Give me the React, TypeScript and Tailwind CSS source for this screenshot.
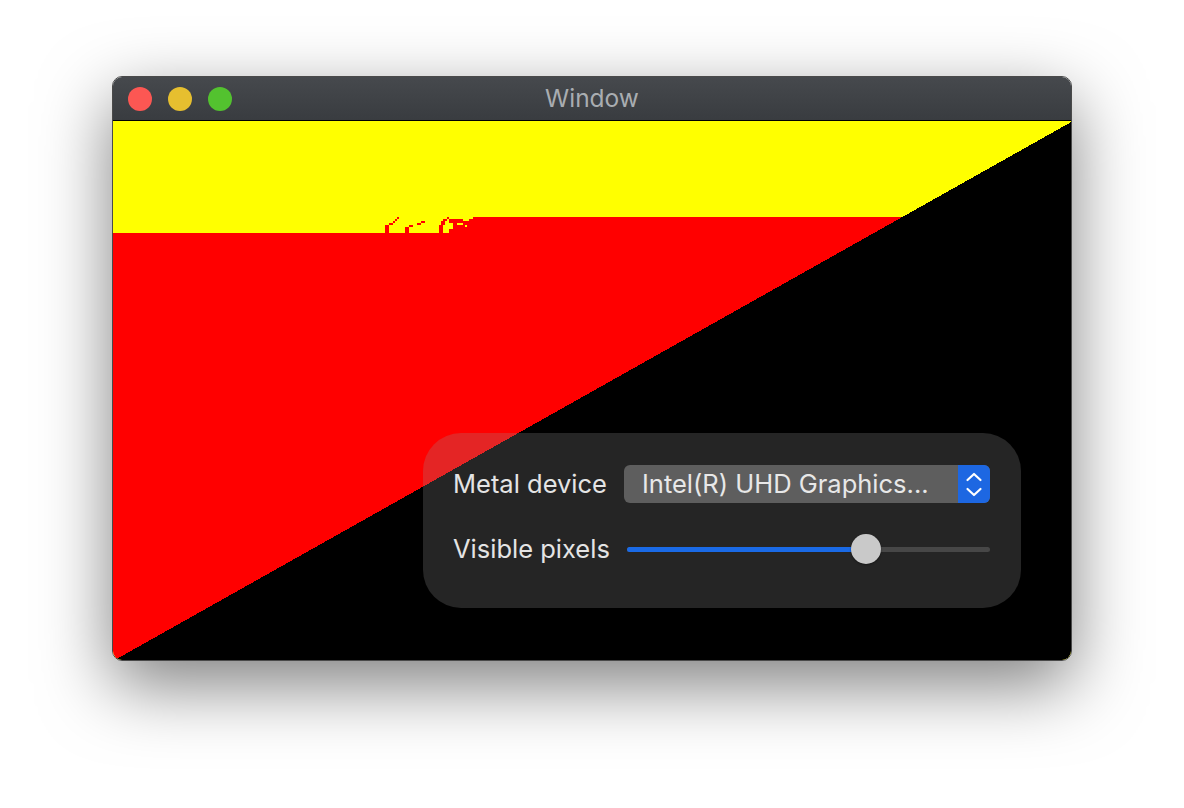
import React from 'react';

const stairsRed: [number, number, number, number][] = [
  [384, 224, 4, 8],
  [388, 222, 4, 2],
  [392, 220, 2, 2],
  [394, 218, 2, 2],
  [396, 216, 2, 2],
  [404, 226, 4, 6],
  [408, 224, 4, 2],
  [416, 222, 4, 2],
  [420, 220, 4, 2],
  [438, 224, 4, 8],
  [440, 220, 4, 4],
  [442, 218, 4, 2],
  [446, 216, 2, 2],
];

const holesYellow: [number, number, number, number][] = [
  [448, 222, 4, 6],
  [456, 222, 6, 2],
  [462, 218, 6, 2],
  [464, 224, 2, 2],
  [448, 216, 24, 2],
];

function Canvas() {
  return (
    <svg width="960" height="540" viewBox="112 120 960 540" className="block" shapeRendering="crispEdges">
      <rect x="112" y="120" width="960" height="540" fill="#ffff00" />
      <polygon points="112,232 448,232 448,218 472,218 472,216 901.3,216 112,660" fill="#ff0000" />
      {stairsRed.map(([x, y, w, h], i) => (
        <rect key={`r${i}`} x={x} y={y} width={w} height={h} fill="#ff0000" />
      ))}
      {holesYellow.map(([x, y, w, h], i) => (
        <rect key={`y${i}`} x={x} y={y} width={w} height={h} fill="#ffff00" />
      ))}
      <polygon points="1072,120 1072,660 112,660" fill="#000000" />
    </svg>
  );
}

function PopUp() {
  return (
    <div className="flex h-[38px] items-stretch overflow-hidden rounded-[6px] bg-[#5e5e5e]">
      <div className="flex flex-1 items-center whitespace-nowrap pl-[18px] text-[25.5px] leading-none text-[#e8e8e8]">
        Intel(R) UHD Graphics...
      </div>
      <div className="flex w-[32px] flex-col items-center justify-center gap-[5px] bg-[#1d67e2]">
        <svg width="18" height="10" viewBox="0 0 18 10" fill="none">
          <path d="M2.5 8 L9 2 L15.5 8" stroke="#ffffff" strokeWidth="2.2" strokeLinecap="round" strokeLinejoin="round" />
        </svg>
        <svg width="18" height="10" viewBox="0 0 18 10" fill="none">
          <path d="M2.5 2 L9 8 L15.5 2" stroke="#ffffff" strokeWidth="2.2" strokeLinecap="round" strokeLinejoin="round" />
        </svg>
      </div>
    </div>
  );
}

function Slider({ value }: { value: number }) {
  return (
    <div className="relative ml-[3px] flex h-[30px] items-center">
      <div className="h-[5px] w-full rounded-full bg-[#474747]">
        <div className="h-full rounded-full bg-[#1a6ae6]" style={{ width: `${value}%` }} />
      </div>
      <div
        className="absolute top-0 h-[30px] w-[30px] -translate-x-1/2 rounded-full bg-[#c9c9c9] shadow-[0_1px_2px_rgba(0,0,0,0.4)]"
        style={{ left: `${value}%` }}
      />
    </div>
  );
}

export default function App() {
  return (
    <div className="min-h-[808px] bg-white pl-[112px] pt-[76px]" style={{ fontFamily: 'Inter, "Noto Sans", sans-serif' }}>
      <div className="w-[960px] overflow-hidden rounded-[10px] border border-[#4a4a4a] shadow-[0_24px_70px_rgba(0,0,0,0.5)]">
        <div className="relative flex h-[44px] items-center border-b border-black bg-gradient-to-b from-[#46494d] to-[#393c40] pl-[15px]">
          <div className="flex gap-[16px]">
            <div className="h-[24px] w-[24px] rounded-full bg-[#fc5753]" />
            <div className="h-[24px] w-[24px] rounded-full bg-[#e6bf2f]" />
            <div className="h-[24px] w-[24px] rounded-full bg-[#53c22f]" />
          </div>
          <div className="absolute inset-0 flex items-center justify-center text-[24.5px] text-[#a9adb1]">Window</div>
        </div>
        <div className="relative h-[539px] overflow-hidden">
          <Canvas />
          <div className="absolute left-[310px] top-[312px] w-[598px] rounded-[38px] bg-[rgba(148,148,148,0.25)] pb-[44px] pl-[30px] pr-[31px] pt-[32px]">
            <div className="grid grid-cols-[155px_1fr] items-center gap-x-[16px] gap-y-[31px]">
              <div className="whitespace-nowrap text-[25.5px] leading-none text-[#e4e4e4]">Metal device</div>
              <PopUp />
              <div className="whitespace-nowrap text-[25.5px] leading-none text-[#e4e4e4]">Visible pixels</div>
              <Slider value={65.8} />
            </div>
          </div>
        </div>
      </div>
    </div>
  );
}
